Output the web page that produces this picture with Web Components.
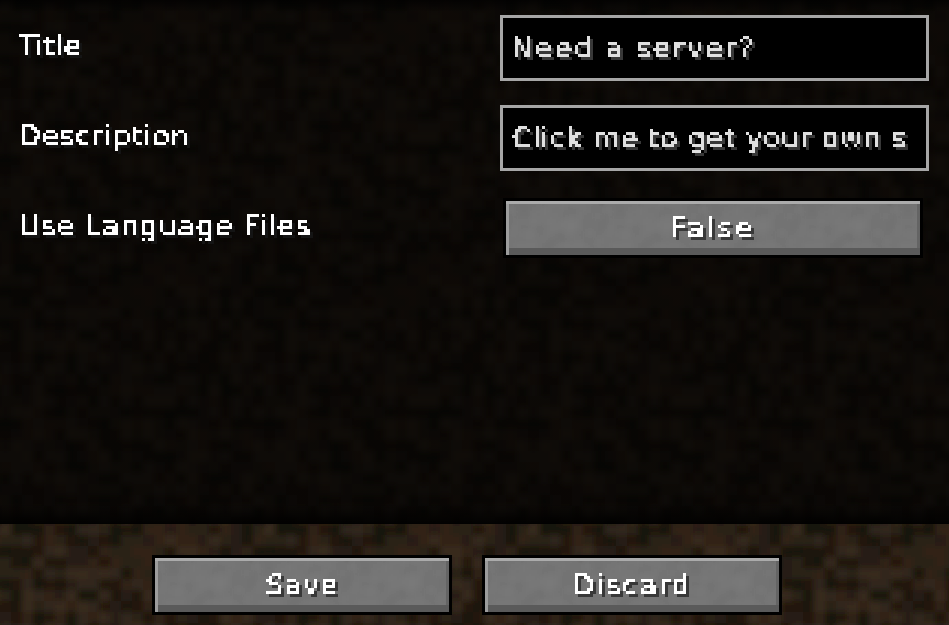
<!DOCTYPE html>
<html>
<head>
<meta charset="utf-8">
<title>Config</title>
<style>
  html, body { margin: 0; height: 100%; background: #120e0a; }
  body { font: 28px/34px "DejaVu Sans", sans-serif; letter-spacing: 1px; color: #fff; overflow: hidden; }
</style>
</head>
<body>
<mc-screen>
  <mc-row label="Title" style="letter-spacing:.5px"><mc-input style="letter-spacing:2.3px">Need a server?</mc-input></mc-row>
  <mc-row label="Description"><mc-input style="letter-spacing:.8px">Click me to get your own s</mc-input></mc-row>
  <mc-row label="Use Language Files" style="letter-spacing:1.25px"><mc-button wide style="letter-spacing:3px">False</mc-button></mc-row>
  <mc-button slot="footer">Save</mc-button>
  <mc-button slot="footer" style="letter-spacing:2px">Discard</mc-button>
</mc-screen>

<script>
  // small seeded noise so the tiles come out the same on every run
  function noise(seed) {
    let s = seed;
    return () => {
      s = (s * 16807) % 2147483647;
      return (s - 1) / 2147483646;
    };
  }

  function tile(size, colors, seed, blur) {
    const r = noise(seed);
    let rects = '';
    for (let y = 0; y < size; y++) {
      for (let x = 0; x < size; x++) {
        const c = colors[Math.floor(r() * colors.length)];
        // wrap the tile edges so the blur does not leave seams
        for (const [dx, dy] of [[0, 0], [size, 0], [0, size], [-size, 0], [0, -size]]) {
          rects += `<rect x="${x + dx}" y="${y + dy}" width="1" height="1" fill="${c}"/>`;
        }
      }
    }
    const svg = `<svg xmlns="http://www.w3.org/2000/svg" viewBox="0 0 ${size} ${size}" width="${size * 6}" height="${size * 6}">
      <filter id="b" x="-20%" y="-20%" width="140%" height="140%"><feGaussianBlur stdDeviation="${blur}"/></filter>
      <g filter="url(#b)" shape-rendering="crispEdges">${rects}</g></svg>`;
    return `url("data:image/svg+xml,${encodeURIComponent(svg)}")`;
  }

  const rootStyle = document.documentElement.style;
  rootStyle.setProperty('--dirt', tile(24, ['#392a1f', '#32261b', '#2c2018', '#281d15', '#221911', '#19120c', '#302319', '#1e160f'], 4711, 0.35));
  rootStyle.setProperty('--stone', tile(16, ['#727272', '#757575', '#777777', '#797979', '#747474', '#717171'], 90210, 0.5));

  const pixelFilter = `<svg width="0" height="0" style="position:absolute">
      <filter id="pix" filterUnits="userSpaceOnUse" x="0" y="0" width="500" height="60" color-interpolation-filters="sRGB">
        <feFlood x="1" y="1" width="1" height="1"/>
        <feComposite width="3" height="3"/>
        <feTile result="grid"/>
        <feComposite in="SourceGraphic" in2="grid" operator="in"/>
        <feMorphology operator="dilate" radius="1"/>
        <feComponentTransfer>
          <feFuncA type="discrete" tableValues="0 1 1 1"/>
        </feComponentTransfer>
        <feGaussianBlur stdDeviation="0.35"/>
      </filter>
    </svg>`;

  class McText extends HTMLElement {
    constructor() {
      super();
      this.attachShadow({ mode: 'open' }).innerHTML = `
        <style>
          :host { display: inline-block; margin-top: -1px; }
          span {
            display: inline-block;
            white-space: nowrap;
            padding: 2px 0;
            filter: url(#pix) drop-shadow(3px 3px 0 var(--shadow, #3c3c3c));
          }
        </style>
        ${pixelFilter}
        <span><slot></slot></span>`;
    }
  }

  class McScreen extends HTMLElement {
    constructor() {
      super();
      this.attachShadow({ mode: 'open' }).innerHTML = `
        <style>
          :host { display: flex; flex-direction: column; height: 625px; }
          .list {
            flex: 1;
            display: flex;
            flex-direction: column;
            gap: 24px;
            padding: 15px 20px 0 18px;
            background:
              linear-gradient(#000a, #0000 12px, #0000 calc(100% - 20px), #000d),
              linear-gradient(#000000b8, #000000b8),
              var(--dirt) 0 0 / 264px 264px;
          }
          .footer {
            height: 101px;
            box-sizing: border-box;
            display: flex;
            justify-content: center;
            gap: 30px;
            padding: 31px 15px 0 0;
            background: var(--dirt) 0 0 / 264px 264px;
          }
        </style>
        <div class="list"><slot></slot></div>
        <div class="footer"><slot name="footer"></slot></div>`;
    }
  }

  class McRow extends HTMLElement {
    constructor() {
      super();
      this.attachShadow({ mode: 'open' }).innerHTML = `
        <style>
          :host { display: grid; grid-template-columns: 482px 429px; height: 66px; }
          .label { padding: 14px 0 0 1px; --shadow: #141414; }
        </style>
        <div class="label"><mc-text></mc-text></div>
        <slot></slot>`;
      this.shadowRoot.querySelector('mc-text').textContent = this.getAttribute('label');
    }
  }

  class McInput extends HTMLElement {
    constructor() {
      super();
      this.attachShadow({ mode: 'open' }).innerHTML = `
        <style>
          :host {
            display: block;
            height: 66px;
            box-sizing: border-box;
            border: 3px solid #a6a6a6;
            background: #000;
            color: #e0e0e0;
            padding: 13px 9px 0;
            overflow: hidden;
            --shadow: #383838;
          }
        </style>
        <mc-text><slot></slot></mc-text>`;
    }
  }

  class McButton extends HTMLElement {
    constructor() {
      super();
      this.attachShadow({ mode: 'open' }).innerHTML = `
        <style>
          :host {
            display: flex;
            justify-content: center;
            box-sizing: border-box;
            width: 300px;
            height: 60px;
            padding-top: 10px;
            border: 3px solid #000;
            background: var(--stone) 0 0 / 96px 96px;
            box-shadow:
              inset 0 3px #ababab,
              inset 3px 0 #9c9c9c,
              inset 0 -7px #5a5a5a,
              inset -3px 0 #646464;
            color: #fff;
            --shadow: #383838;
          }
          :host([wide]) { width: 420px; margin: 3px 0 0 3px; }
        </style>
        <mc-text><slot></slot></mc-text>`;
    }
  }

  customElements.define('mc-text', McText);
  customElements.define('mc-input', McInput);
  customElements.define('mc-button', McButton);
  customElements.define('mc-row', McRow);
  customElements.define('mc-screen', McScreen);
</script>
</body>
</html>
